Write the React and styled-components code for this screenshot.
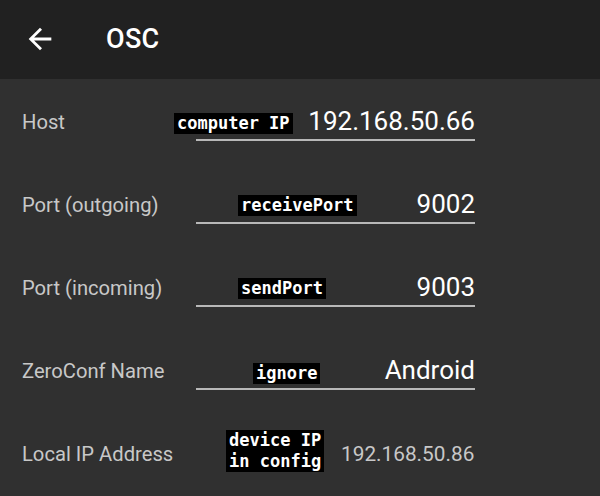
import React from 'react'
import styled, { createGlobalStyle } from 'styled-components'

const Global = createGlobalStyle`
  html, body {
    margin: 0;
    padding: 0;
    background: #303030;
  }
  body {
    font-family: Roboto, "Liberation Sans", sans-serif;
    width: 600px;
    height: 496px;
    overflow: hidden;
  }
`

const rows = [
  { label: 'Host', value: '192.168.50.66', note: 'computer IP', left: 174, top: 34 },
  { label: 'Port (outgoing)', value: '9002', note: 'receivePort', left: 238, top: 33 },
  { label: 'Port (incoming)', value: '9003', note: 'sendPort', left: 238, top: 33 },
  { label: 'ZeroConf Name', value: 'Android', note: 'ignore', left: 253, top: 35 },
]

const BackArrow = () => (
  <svg width="34" height="34" viewBox="0 0 24 24" fill="#fff">
    <path d="M20 11H7.83l5.59-5.59L12 4l-8 8 8 8 1.41-1.41L7.83 13H20v-2z" />
  </svg>
)

const App = () => {
  return <Page>
    <Global />
    <Toolbar>
      <BackButton type='button'><BackArrow /></BackButton>
      <Title>OSC</Title>
    </Toolbar>
    <List>
      {rows.map(r => (
        <Row key={r.label}>
          <Label>{r.label}</Label>
          <Field>
            <Value>{r.value}</Value>
          </Field>
          <Note $left={r.left} $top={r.top}>{r.note}</Note>
        </Row>
      ))}
      <Row>
        <Label>Local IP Address</Label>
        <StaticValue>192.168.50.86</StaticValue>
        <Note $left={226} $top={19}>device IP<br />in config</Note>
      </Row>
    </List>
  </Page>
}

const Page = styled.div`
  width: 600px;
  height: 496px;
  background: #303030;
  display: flex;
  flex-direction: column;
`

const Toolbar = styled.div`
  height: 79px;
  background: #212121;
  display: flex;
  align-items: center;
  padding-left: 23px;
  box-sizing: border-box;
`

const BackButton = styled.button`
  background: none;
  border: none;
  padding: 0;
  width: 34px;
  height: 34px;
  display: flex;
  margin-top: -2px;
  cursor: pointer;
`

const Title = styled.h1`
  margin: -1px 0 0 49px;
  color: #fff;
  font-size: 27px;
  font-weight: 500;
  letter-spacing: 0.3px;
`

const List = styled.div`
  display: flex;
  flex-direction: column;
`

const Row = styled.div`
  position: relative;
  height: 83px;
  display: flex;
  align-items: center;
  padding-left: 22px;
`

const Label = styled.div`
  width: 174px;
  padding-top: 3px;
  color: #c8c8c8;
  font-size: 20.2px;
`

const Field = styled.div`
  width: 279px;
  height: 38px;
  box-sizing: content-box;
  border-bottom: 2px solid #b8b8b8;
  display: flex;
  align-items: flex-end;
  justify-content: flex-end;
`

const Value = styled.span`
  color: #fff;
  font-size: 26px;
  line-height: 1;
  padding-bottom: 5px;
`

const StaticValue = styled.span`
  margin-left: 145px;
  padding-top: 3px;
  color: #c8c8c8;
  font-size: 20.8px;
`

const Note = styled.div`
  position: absolute;
  left: ${p => p.$left}px;
  top: ${p => p.$top}px;
  background: #000;
  color: #fff;
  font-family: "DejaVu Sans Mono", monospace;
  font-weight: bold;
  font-size: 17px;
  line-height: 21px;
  padding: 0 3px;
  white-space: nowrap;
`

export default App
